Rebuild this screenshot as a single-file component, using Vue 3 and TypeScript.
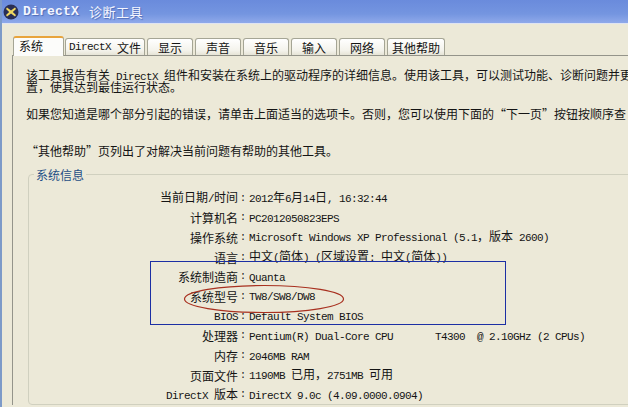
<template>
  <div class="window">
    <div class="titlebar">
      <svg class="app-icon" viewBox="0 0 16 16" width="16" height="16">
        <circle cx="8" cy="8" r="7.5" fill="#2a2f55" />
        <path d="M4 3.5 L8 6.5 L12 3.5 L13 5 L9.8 8 L13 11 L12 12.5 L8 9.5 L4 12.5 L3 11 L6.2 8 L3 5 Z" fill="#f0d860" />
      </svg>
      <span class="title-latin">DirectX</span>
      <span class="title-cjk">诊断工具</span>
    </div>

    <div class="client">
      <div class="tabs">
        <div
          v-for="tab in tabs"
          :key="tab.name"
          class="tab"
          :class="{ active: tab.active }"
          :style="{ width: tab.width + 'px' }"
        >
          <template v-for="(r, i) in runs(tab.name)" :key="i">
            <span :class="r.cls">{{ r.text }}</span>
          </template>
        </div>
      </div>

      <div class="panel">
        <p v-for="(para, p) in intro" :key="p" class="para" :class="para.cls">
          <span v-for="(line, l) in para.lines" :key="l" class="line">
            <span v-for="(r, i) in runs(line)" :key="i" :class="r.cls">{{ r.text }}</span>
          </span>
        </p>

        <fieldset class="group">
          <legend class="group-title">系统信息</legend>
          <div class="rows">
            <div v-for="row in rows" :key="row.label" class="row">
              <div class="row-label">
                <span v-for="(r, i) in runs(row.label)" :key="i" :class="r.cls">{{ r.text }}</span>
              </div>
              <div class="row-colon">:</div>
              <div class="row-value">
                <span v-for="(r, i) in runs(row.value)" :key="i" :class="r.cls">{{ r.text }}</span>
              </div>
            </div>
          </div>
        </fieldset>
      </div>
    </div>

    <div class="highlight-box"></div>
    <svg class="highlight-ring" viewBox="0 0 162 30" width="162" height="30">
      <ellipse cx="81" cy="15" rx="79.5" ry="13.5" fill="none" stroke="#a8301f" stroke-width="1.2" />
    </svg>
  </div>
</template>

<script setup lang="ts">
interface Run {
  text: string;
  cls: string;
}

const tabs = [
  { name: "系统", width: 51, active: true },
  { name: "DirectX 文件", width: 80, active: false },
  { name: "显示", width: 46, active: false },
  { name: "声音", width: 46, active: false },
  { name: "音乐", width: 46, active: false },
  { name: "输入", width: 46, active: false },
  { name: "网络", width: 46, active: false },
  { name: "其他帮助", width: 58, active: false },
];

const intro = [
  {
    cls: "p1",
    lines: [
      "该工具报告有关 DirectX 组件和安装在系统上的驱动程序的详细信息。使用该工具，可以测试功能、诊断问题并更",
      "置，使其达到最佳运行状态。",
    ],
  },
  {
    cls: "p2",
    lines: ["如果您知道是哪个部分引起的错误，请单击上面适当的选项卡。否则，您可以使用下面的“下一页”按钮按顺序查"],
  },
  {
    cls: "p3",
    lines: ["“其他帮助”页列出了对解决当前问题有帮助的其他工具。"],
  },
];

const rows = [
  { label: "当前日期/时间", value: "2012年6月14日, 16:32:44" },
  { label: "计算机名", value: "PC2012050823EPS" },
  { label: "操作系统", value: "Microsoft Windows XP Professional (5.1，版本 2600)" },
  { label: "语言", value: "中文(简体) (区域设置: 中文(简体))" },
  { label: "系统制造商", value: "Quanta" },
  { label: "系统型号", value: "TW8/SW8/DW8" },
  { label: "BIOS", value: "Default System BIOS" },
  { label: "处理器", value: "Pentium(R) Dual-Core CPU       T4300  @ 2.10GHz (2 CPUs)" },
  { label: "内存", value: "2046MB RAM" },
  { label: "页面文件", value: "1190MB 已用，2751MB 可用" },
  { label: "DirectX 版本", value: "DirectX 9.0c (4.09.0000.0904)" },
];

// SimSun look: latin runs are half the width of the CJK ones
const runs = (text: string): Run[] => {
  const parts = text.match(/[\x20-\x7e]+|[^\x20-\x7e]+/g) || [];
  return parts.map((part) => ({
    text: part,
    cls: /^[\x20-\x7e]/.test(part) ? "latin" : "cjk",
  }));
};
</script>

<style>
html,
body {
  margin: 0;
  background: #ece9d8;
}
</style>

<style scoped>
.window {
  position: relative;
  width: 628px;
  height: 407px;
  overflow: hidden;
  background: #ece9d8;
  color: #141414;
  font-family: "Noto Sans CJK SC", "Liberation Mono", sans-serif;
  font-size: 12px;
  box-sizing: border-box;
  border-left: 2px solid #7d9ac8;
}

.latin {
  font-family: "Liberation Mono", monospace;
  font-size: 11px;
  letter-spacing: -0.6px;
  white-space: pre;
}

.cjk {
  white-space: pre;
}

.titlebar {
  height: 23px;
  margin-left: -2px;
  display: flex;
  align-items: center;
  padding-left: 3px;
  background: linear-gradient(180deg, #6a8bdc 0%, #7495e0 60%, #8fa9ea 100%);
  border-bottom: 1px solid #dfe4f2;
  color: #f4f6ff;
}

.app-icon {
  flex-shrink: 0;
  margin-right: 4px;
}

.title-latin {
  font-family: "Liberation Mono", monospace;
  font-size: 13px;
  font-weight: 700;
  letter-spacing: 0.2px;
  margin-right: 10px;
  text-shadow: 1px 1px 1px #4f6cb8;
}

.title-cjk {
  font-size: 13px;
  letter-spacing: 0.5px;
  text-shadow: 1px 1px 1px #4f6cb8;
}

.client {
  padding: 11px 0 0 10px;
}

.tabs {
  display: flex;
  align-items: flex-end;
  gap: 2px;
  height: 20px;
  padding-left: 1px;
}

.tab {
  height: 17px;
  box-sizing: border-box;
  display: flex;
  align-items: center;
  justify-content: center;
  border: 1px solid #a5a595;
  border-bottom: none;
  border-radius: 3px 3px 0 0;
  background: linear-gradient(180deg, #ffffff 0%, #f4f3ec 70%, #e6e4d6 100%);
}

.tab.active {
  height: 20px;
  margin-right: -1px;
  justify-content: flex-start;
  padding: 0 0 3px 5px;
  background: #fcfcfa;
  border-color: #a5a595;
  border-top: 2px solid #e8a43c;
  position: relative;
  z-index: 1;
  margin-bottom: -1px;
}

.panel {
  border-top: 1px solid #94948a;
  border-left: 1px solid #94948a;
  padding: 0 0 0 13px;
  overflow: hidden;
}

.para {
  margin: 0;
  white-space: nowrap;
}

.line {
  display: block;
  height: 12px;
  line-height: 12px;
}

.p1 {
  margin-top: 13px;
}

.p2 {
  margin-top: 15px;
}

.p3 {
  margin-top: 25px;
}

.group {
  margin: 10px -40px 0 2px;
  padding: 0;
  border: 1px solid #d0d0bf;
  border-radius: 4px;
  min-width: 0;
}

.group-title {
  margin-left: 5px;
  padding: 0 2px;
  color: #1f4f86;
  line-height: 15px;
}

.rows {
  padding-top: 5px;
}

.row {
  display: grid;
  grid-template-columns: 209px 11px 1fr;
  height: 19.7px;
  line-height: 19.7px;
  align-items: center;
  white-space: nowrap;
}

.row-label {
  text-align: right;
}

.row-colon {
  padding-left: 2px;
  font-family: "Liberation Mono", monospace;
  font-size: 10px;
}

.highlight-box {
  position: absolute;
  left: 148px;
  top: 261px;
  width: 354px;
  height: 62px;
  border: 1.5px solid #1c2fa4;
  pointer-events: none;
}

.highlight-ring {
  position: absolute;
  left: 181px;
  top: 284px;
  pointer-events: none;
}
</style>
